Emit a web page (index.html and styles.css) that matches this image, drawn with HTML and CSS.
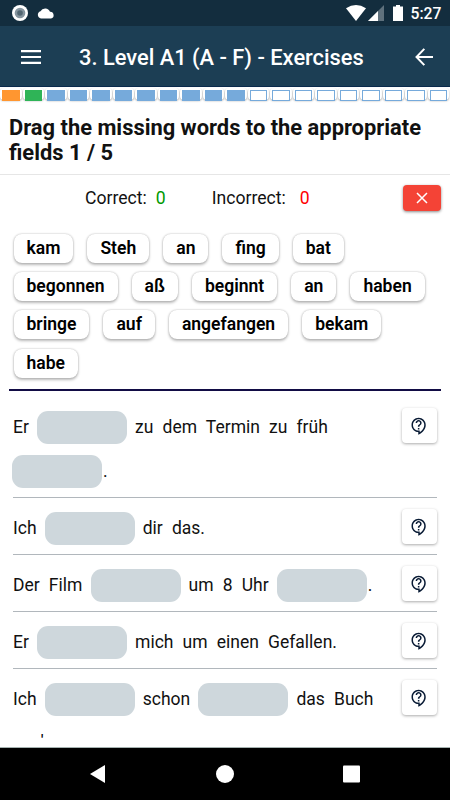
FILE: index.html
```html
<!DOCTYPE html>
<html lang="de">
<head>
<meta charset="utf-8">
<title>Exercises</title>
<link rel="stylesheet" href="styles.css">
</head>
<body>
<svg width="0" height="0" class="defs"><symbol id="help" viewBox="0 0 24 24"><path d="M11 23.59v-3.6c-5.01-.26-9-4.42-9-9.49C2 5.26 6.26 1 11.500 1S21 5.260 21 10.500c0 4.950-3.440 9.930-8.570 12.400l-1.430.69zM11.500 3C7.360 3 4 6.360 4 10.500S7.360 18 11.500 18H13v2.300c3.640-2.300 6-6.080 6-9.800C19 6.360 15.640 3 11.500 3zm-1 11.500h2v2h-2v-2zm2-1.500h-2c0-3.250 3-3 3-5 0-1.100-.9-2-2-2s-2 .9-2 2h-2c0-2.210 1.790-4 4-4s4 1.790 4 4c0 2.500-3 2.750-3 5z"/></symbol></svg>
<div class="status">
  <svg class="rec" viewBox="0 0 16 16"><circle cx="8" cy="8" r="8" fill="#fff"/><circle cx="8" cy="8" r="5.300" fill="#86959f"/><circle cx="8" cy="8" r="2.800" fill="#526672"/></svg>
  <svg class="cloud" viewBox="0 0 18 11"><path fill="#fff" d="M4 10.500a3.700 3.700 0 0 1-.5-7.200A5.200 5.200 0 0 1 13 3.800a3.400 3.400 0 0 1 1 6.700z"/></svg>
  <svg class="wifi" viewBox="0 0 20 16"><path fill="#fff" d="M0 3.200Q10-3.200 20 3.200L10 16z"/></svg>
  <svg class="signal" viewBox="0 0 16 16"><path fill="#5f717d" d="M16 0v16H0z"/><path fill="#fff" d="M10 6v10H0z"/></svg>
  <svg class="battery" viewBox="0 0 10 16"><path fill="#fff" d="M3 0h4v1.500h3V16H0V1.500h3z"/></svg>
  <span class="clock">5:27</span>
</div>
<header>
  <svg class="menu" viewBox="0 0 20 14"><path fill="#fff" d="M0 0h20v2.200H0zM0 5.900h20v2.200H0zM0 11.800h20V14H0z"/></svg>
  <h1>3. Level A1 (A - F) - Exercises</h1>
  <svg class="back" viewBox="0 0 18 18"><path fill="none" stroke="#fff" stroke-width="2" d="M9.300 .9 1.500 9l7.800 8.100M1.500 9H18"/></svg>
</header>
<div class="progress">
  <i class="orange"></i><i class="green"></i><i class="full"></i><i class="full"></i><i class="full"></i><i class="full"></i><i class="full"></i><i class="full"></i><i class="full"></i><i class="full"></i><i class="full"></i><i></i><i></i><i></i><i></i><i></i><i></i><i></i><i></i><i></i>
</div>
<h2>Drag the missing words to the appropriate<br>fields 1 / 5</h2>
<div class="score">
  <span class="label">Correct:</span><span class="ok">0</span>
  <span class="label bad-label">Incorrect:</span><span class="bad">0</span>
  <button class="close"><svg viewBox="0 0 12 12"><path stroke="#fff" stroke-width="1.500" d="M1 1l10 10M11 1 1 11"/></svg></button>
</div>
<div class="bank">
  <div class="chips"><b>kam</b><b>Steh</b><b>an</b><b>fing</b><b>bat</b></div>
  <div class="chips"><b>begonnen</b><b>aß</b><b>beginnt</b><b>an</b><b>haben</b></div>
  <div class="chips"><b>bringe</b><b>auf</b><b>angefangen</b><b>bekam</b></div>
  <div class="chips"><b>habe</b></div>
</div>
<main>
  <section class="row first">
    <div class="text"><div class="line"><span>Er</span><span class="blank"></span><span>zu dem Termin zu früh</span></div><div class="line second"><span class="blank"></span><span>.</span></div></div>
    <button class="help"><svg><use href="#help"/></svg></button>
  </section>
  <section class="row"><div class="line"><span>Ich</span><span class="blank"></span><span>dir das.</span></div><button class="help"><svg><use href="#help"/></svg></button></section>
  <section class="row"><div class="line"><span>Der Film</span><span class="blank"></span><span>um 8 Uhr</span><span class="blank tight"></span><span>.</span></div><button class="help"><svg><use href="#help"/></svg></button></section>
  <section class="row"><div class="line"><span>Er</span><span class="blank"></span><span>mich um einen Gefallen.</span></div><button class="help"><svg><use href="#help"/></svg></button></section>
  <section class="row last"><div class="text"><div class="line"><span>Ich</span><span class="blank"></span><span>schon</span><span class="blank"></span><span>das Buch</span></div><div class="cut">'</div></div><button class="help"><svg><use href="#help"/></svg></button></section>
</main>
<nav>
  <svg viewBox="0 0 18 18"><path fill="#fff" d="M1 9 16 0v18z"/></svg>
  <svg viewBox="0 0 18 18"><circle cx="9" cy="9" r="9" fill="#fff"/></svg>
  <svg viewBox="0 0 18 18"><rect x="1" y=".5" width="17" height="17" rx="1" fill="#fff"/></svg>
</nav>
</body>
</html>
```
FILE: styles.css
```css
* { box-sizing: border-box; }
body { margin: 0; width: 450px; height: 800px; overflow: hidden; display: flex; flex-direction: column; background: #fff; color: #111; font-family: Roboto, sans-serif; }
svg { display: block; flex: none; }
button { border: 0; padding: 0; display: flex; align-items: center; justify-content: center; }
.defs { display: none; }
.status { height: 26px; flex: none; background: #132d3e; display: flex; align-items: center; padding: 0 8px 0 12px; color: #fff; }
.rec { width: 16px; height: 16px; }
.cloud { width: 18px; height: 11px; margin-left: 9px; }
.wifi { width: 20px; height: 16px; margin-left: auto; }
.signal { width: 16px; height: 16px; margin-left: 2px; }
.battery { width: 10px; height: 16px; margin-left: 9px; }
.clock { font-size: 15.700px; font-weight: 500; line-height: 26px; margin: 2px 0 0 8px; width: 31.500px; }
header { height: 61px; flex: none; background: #1c3e54; border-bottom: 1px solid #0a2a4c; color: #fff; display: flex; align-items: center; padding: 1px 17px 0 21px; }
.menu { width: 20px; height: 14px; }
.back { width: 18px; height: 18px; margin-left: auto; }
h1 { margin: 2px 0 0 38px; font-size: 21.850px; line-height: 30px; font-weight: 500; white-space: nowrap; }
.progress { flex: none; height: 16px; display: grid; grid-template-columns: repeat(20, 22.500px); padding-top: 1px; }
.progress i { height: 12px; margin: 0 1px 0 0; border: 2px solid #fff; border-radius: 4px; background: #fff; box-shadow: 0 1px 2px #0005; }
.progress i::before { content: ""; display: block; height: 9px; border: 1px solid #76aadb; }
.progress .full::before { background: #76aadb; }
.progress .orange::before { background: #ff9630; border-color: #ff9630; }
.progress .green::before { background: #2fb457; border-color: #2fb457; }
h2 { flex: none; height: 72px; margin: 0; padding: 12px 9px 0; border-bottom: 1px solid #e6e6e6; font-size: 21.880px; line-height: 25px; font-weight: 700; white-space: nowrap; }
.score { height: 46px; flex: none; display: flex; align-items: center; padding: 0 9px 0 85px; font-size: 17.600px; }
.ok { color: #090; margin-left: 9px; }
.bad-label { margin-left: 46px; }
.bad { color: #f00; margin-left: 14px; }
.close { width: 38px; height: 26px; margin-left: auto; border-radius: 4px; background: #f44336; box-shadow: 0 1px 3px #0007; }
.close svg { width: 12px; height: 12px; }
.bank { height: 170px; flex: none; margin: 0 9px; padding: 12.500px 4.500px 0; border-bottom: 2px solid #120c45; }
.chips { display: flex; gap: 14px; height: 38.350px; }
.chips b { height: 29px; padding: 0 13px; border-radius: 8px; font-size: 17.550px; line-height: 29px; font-weight: 600; color: #000; box-shadow: 0 1.500px 3px #0004, 0 0 2px #0003; }
main { height: 356px; flex: none; overflow: hidden; padding: 0 13px; }
.row { height: 57px; display: flex; justify-content: space-between; align-items: flex-start; border-bottom: 1px solid #b1b7bc; padding-top: 14px; }
.first { height: 107px; padding-top: 20px; }
.line { display: flex; align-items: center; height: 33px; font-size: 17.500px; line-height: 20px; word-spacing: 4.800px; white-space: nowrap; }
.line span:not(.blank) { padding-bottom: 2px; }
.blank { width: 90px; height: 33px; margin: 0 8px 0 8.200px; border-radius: 11px; background: #ced7dc; }
.tight { margin-right: 1px; }
.second { margin-top: 11px; }
.second .blank { margin: 0 1px 0 -1px; }
.help { width: 35px; height: 35px; margin-top: -3px; border-radius: 4px; background: #fff; box-shadow: 0 1px 3px #0005; }
.help svg { width: 18px; height: 18px; fill: #091b35; margin-right: 1px; }
.last { height: 100px; border: 0; }
.cut { font-size: 14px; font-weight: 600; line-height: 12px; color: #000; margin: 18px 0 0 28px; }
nav { height: 53px; flex: none; border-top: 1px solid #a5b2b0; background: #000; display: flex; align-items: center; justify-content: space-between; padding: 0 90px 0 89px; }
nav svg { width: 18px; height: 18px; }
```
